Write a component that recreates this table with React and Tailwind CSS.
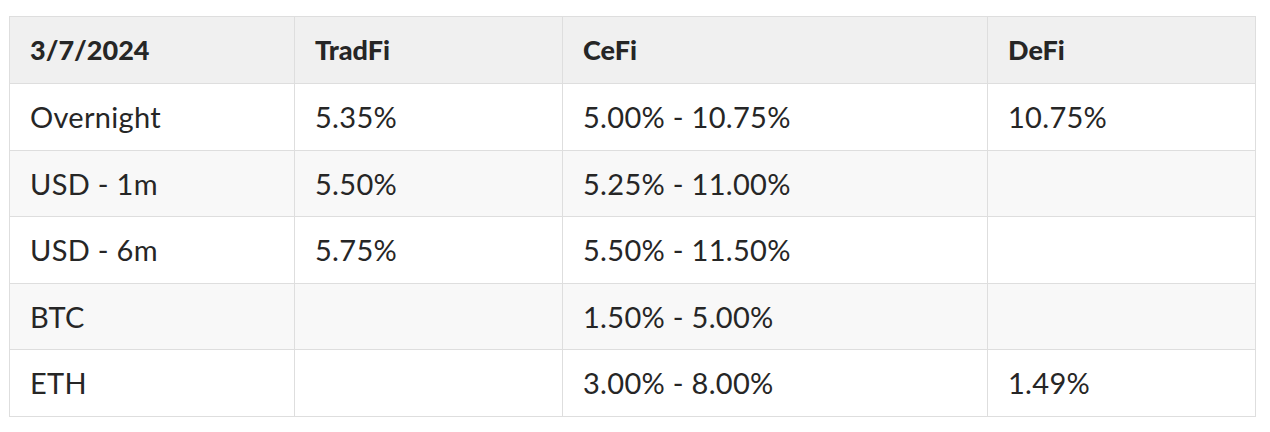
const header = ['3/7/2024', 'TradFi', 'CeFi', 'DeFi']

const rows = [
  ['Overnight', '5.35%', '5.00% - 10.75%', '10.75%'],
  ['USD - 1m', '5.50%', '5.25% - 11.00%', ''],
  ['USD - 6m', '5.75%', '5.50% - 11.50%', ''],
  ['BTC', '', '1.50% - 5.00%', ''],
  ['ETH', '', '3.00% - 8.00%', '1.49%'],
]

export default function App() {
  return (
    <div className="w-[1270px] h-[432px] bg-white pt-4 pl-[9px] font-['Lato',sans-serif] text-[#262626]">
      <table className="w-[1246px] table-fixed border-collapse">
        <colgroup>
          <col className="w-[285px]" />
          <col className="w-[268px]" />
          <col className="w-[425px]" />
          <col className="w-[268px]" />
        </colgroup>
        <thead>
          <tr className="h-[67px] bg-[#f0f0f0]">
            {header.map((h) => (
              <th
                key={h}
                className="border border-[#dedede] pl-[20px] pr-[21px] text-left align-middle text-[27px] font-black"
              >
                {h}
              </th>
            ))}
          </tr>
        </thead>
        <tbody>
          {rows.map((row, i) => (
            <tr key={row[0]} className={i % 2 === 1 ? 'h-[66.6px] bg-[#f8f8f8]' : 'h-[66.6px] bg-white'}>
              {row.map((cell, j) => (
                <td
                  key={j}
                  className="border border-[#dedede] pl-[20px] pr-[21px] align-middle text-[29px] tracking-[0.3px] font-normal"
                >
                  {cell}
                </td>
              ))}
            </tr>
          ))}
        </tbody>
      </table>
    </div>
  )
}
